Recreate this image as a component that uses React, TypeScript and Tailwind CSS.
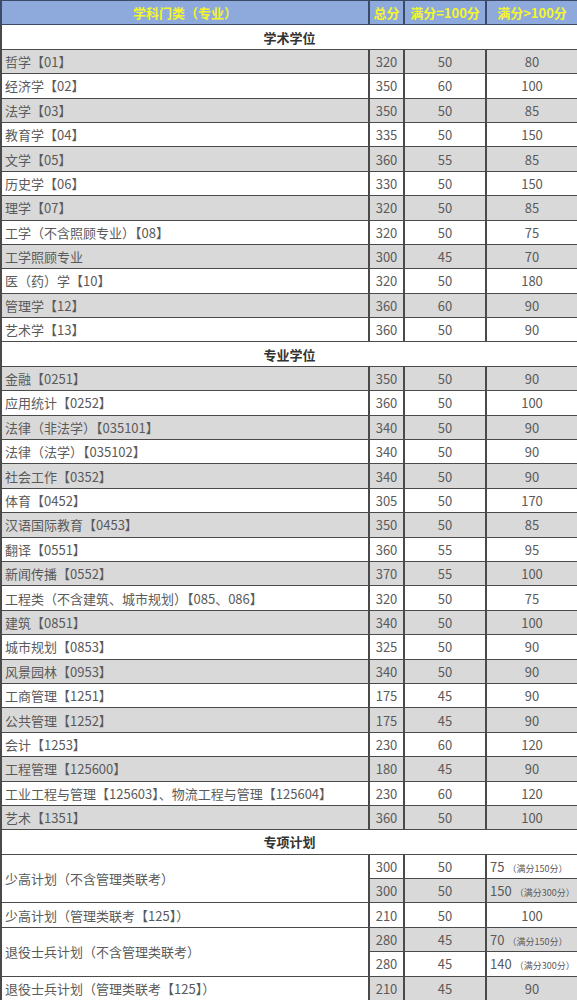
import type { ReactNode } from "react";

type Row = { name: string; total: string; a: string; b: string };

const ACADEMIC: Row[] = [
  { name: "哲学【01】", total: "320", a: "50", b: "80" },
  { name: "经济学【02】", total: "350", a: "60", b: "100" },
  { name: "法学【03】", total: "350", a: "50", b: "85" },
  { name: "教育学【04】", total: "335", a: "50", b: "150" },
  { name: "文学【05】", total: "360", a: "55", b: "85" },
  { name: "历史学【06】", total: "330", a: "50", b: "150" },
  { name: "理学【07】", total: "320", a: "50", b: "85" },
  { name: "工学（不含照顾专业）【08】", total: "320", a: "50", b: "75" },
  { name: "工学照顾专业", total: "300", a: "45", b: "70" },
  { name: "医（药）学【10】", total: "320", a: "50", b: "180" },
  { name: "管理学【12】", total: "360", a: "60", b: "90" },
  { name: "艺术学【13】", total: "360", a: "50", b: "90" }
];

const PROFESSIONAL: Row[] = [
  { name: "金融【0251】", total: "350", a: "50", b: "90" },
  { name: "应用统计【0252】", total: "360", a: "50", b: "100" },
  { name: "法律（非法学）【035101】", total: "340", a: "50", b: "90" },
  { name: "法律（法学）【035102】", total: "340", a: "50", b: "90" },
  { name: "社会工作【0352】", total: "340", a: "50", b: "90" },
  { name: "体育【0452】", total: "305", a: "50", b: "170" },
  { name: "汉语国际教育【0453】", total: "350", a: "50", b: "85" },
  { name: "翻译【0551】", total: "360", a: "55", b: "95" },
  { name: "新闻传播【0552】", total: "370", a: "55", b: "100" },
  { name: "工程类（不含建筑、城市规划）【085、086】", total: "320", a: "50", b: "75" },
  { name: "建筑【0851】", total: "340", a: "50", b: "100" },
  { name: "城市规划【0853】", total: "325", a: "50", b: "90" },
  { name: "风景园林【0953】", total: "340", a: "50", b: "90" },
  { name: "工商管理【1251】", total: "175", a: "45", b: "90" },
  { name: "公共管理【1252】", total: "175", a: "45", b: "90" },
  { name: "会计【1253】", total: "230", a: "60", b: "120" },
  { name: "工程管理【125600】", total: "180", a: "45", b: "90" },
  { name: "工业工程与管理【125603】、物流工程与管理【125604】", total: "230", a: "60", b: "120" },
  { name: "艺术【1351】", total: "360", a: "50", b: "100" }
];

const td = "border-x-2 border-y border-[#4a4a4a] px-[3px] text-center";
const tdName = "border-x-2 border-y border-[#4a4a4a] pl-[3px] text-left";

function Section({ title }: { title: string }) {
  return (
    <tr className="h-[24.4px] bg-white">
      <td colSpan={4} className="border-x-2 border-y border-[#4a4a4a] text-center font-bold text-[#333]">
        {title}
      </td>
    </tr>
  );
}

function DataRow({ row, shaded }: { row: Row; shaded: boolean }) {
  return (
    <tr className={`h-[24.4px] ${shaded ? "bg-[#d9d9d9]" : "bg-white"}`}>
      <td className={tdName}>{row.name}</td>
      <td className={td}>{row.total}</td>
      <td className={td}>{row.a}</td>
      <td className={td}>{row.b}</td>
    </tr>
  );
}

function Note({ main, note }: { main: string; note: string }): ReactNode {
  return (
    <span className="whitespace-nowrap">
      {main}
      <span className="ml-[3px] text-[9px]">{note}</span>
    </span>
  );
}

export default function App() {
  return (
    <div
      className="w-[577px] overflow-hidden bg-white text-[13px] text-[#5a5a5a]"
      style={{ fontFamily: '"Noto Sans CJK SC", "Noto Sans", sans-serif' }}
    >
      <table className="w-[577px] table-fixed border-collapse leading-none">
        <colgroup>
          <col className="w-[368px]" />
          <col className="w-[35px]" />
          <col className="w-[82px]" />
          <col className="w-[92px]" />
        </colgroup>
        <thead>
          <tr className="h-[24.4px] bg-[#8eaadc] font-bold text-[#f4f52c]">
            <th className="border-x-2 border-y border-[#3b4a66] text-center font-bold">学科门类（专业）</th>
            <th className="border-x-2 border-y border-[#3b4a66] text-center font-bold">总分</th>
            <th className="border-x-2 border-y border-[#3b4a66] text-center font-bold">满分=100分</th>
            <th className="border-x-2 border-y border-[#3b4a66] text-center font-bold">满分&gt;100分</th>
          </tr>
        </thead>
        <tbody>
          <Section title="学术学位" />
          {ACADEMIC.map((row, i) => (
            <DataRow key={row.name} row={row} shaded={i % 2 === 0} />
          ))}
          <Section title="专业学位" />
          {PROFESSIONAL.map((row, i) => (
            <DataRow key={row.name} row={row} shaded={i % 2 === 0} />
          ))}
          <Section title="专项计划" />

          <tr className="h-[24.4px] bg-white">
            <td rowSpan={2} className={`${tdName} bg-white`}>少高计划（不含管理类联考）</td>
            <td className={td}>300</td>
            <td className={td}>50</td>
            <td className={`${td} text-left`}>
              <Note main="75" note="（满分150分）" />
            </td>
          </tr>
          <tr className="h-[24.4px] bg-[#d9d9d9]">
            <td className={td}>300</td>
            <td className={td}>50</td>
            <td className={`${td} text-left`}>
              <Note main="150" note="（满分300分）" />
            </td>
          </tr>
          <tr className="h-[24.4px] bg-white">
            <td className={tdName}>少高计划（管理类联考【125】）</td>
            <td className={td}>210</td>
            <td className={td}>50</td>
            <td className={td}>100</td>
          </tr>
          <tr className="h-[24.4px] bg-[#d9d9d9]">
            <td rowSpan={2} className={`${tdName} bg-white`}>退役士兵计划（不含管理类联考）</td>
            <td className={td}>280</td>
            <td className={td}>45</td>
            <td className={`${td} text-left`}>
              <Note main="70" note="（满分150分）" />
            </td>
          </tr>
          <tr className="h-[24.4px] bg-white">
            <td className={td}>280</td>
            <td className={td}>45</td>
            <td className={`${td} text-left`}>
              <Note main="140" note="（满分300分）" />
            </td>
          </tr>
          <tr className="h-[24.4px] bg-[#d9d9d9]">
            <td className={`${tdName} bg-white`}>退役士兵计划（管理类联考【125】）</td>
            <td className={td}>210</td>
            <td className={td}>45</td>
            <td className={td}>90</td>
          </tr>
        </tbody>
      </table>
    </div>
  );
}
